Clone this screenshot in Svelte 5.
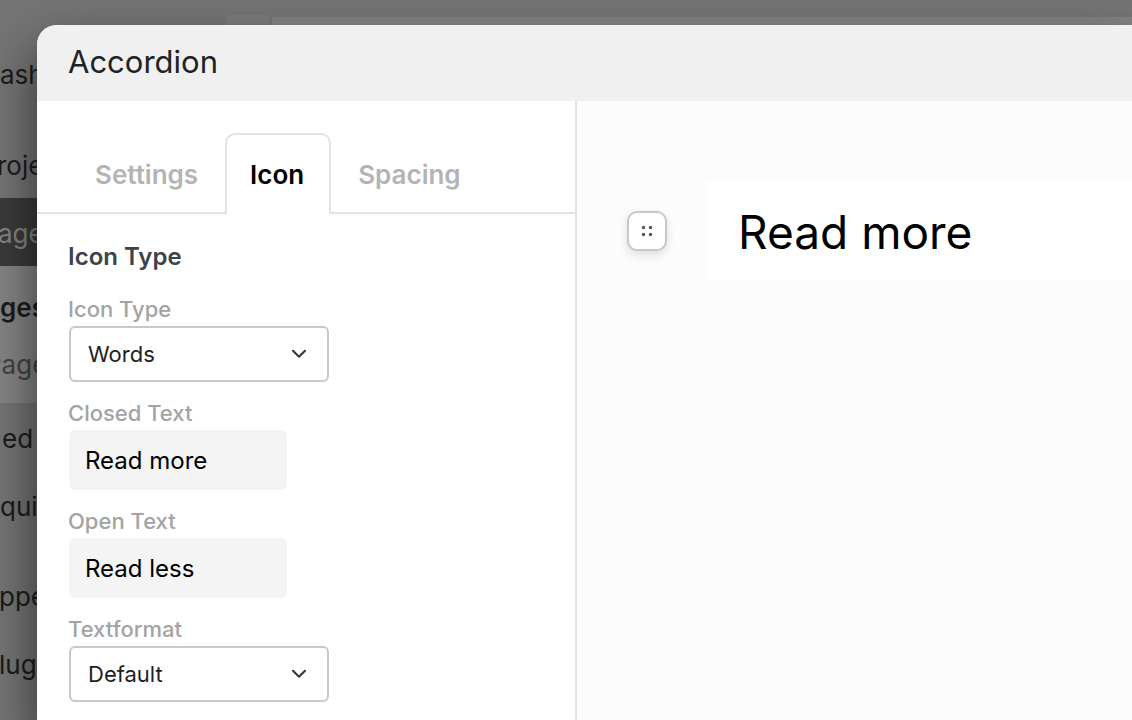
<script>
  const navItems = [
    { label: 'ash', kind: 'first' },
    { label: 'roje', kind: 'project' },
    { label: 'age', kind: 'active' },
    { label: 'ges', kind: 'sub strong' },
    { label: 'Page', kind: 'sub current' },
    { label: 'ed', kind: 'media' },
    { label: 'qui', kind: 'menu' },
    { label: 'ppe', kind: 'appearance' },
    { label: 'lug', kind: 'plugins' }
  ];
  const tabs = ['Settings', 'Icon', 'Spacing'];

  let activeTab = $state('Icon');
  let iconType = $state('Words');
  let closedText = $state('Read more');
  let openText = $state('Read less');
  let textformat = $state('Default');
</script>

{#snippet chevron()}
  <svg class="chevron" viewBox="0 0 16 10" aria-hidden="true">
    <path d="M2 1.8 8 7.8 14 1.8" fill="none" stroke="#333" stroke-width="2" stroke-linecap="round" stroke-linejoin="round" />
  </svg>
{/snippet}

<div class="page">
  <nav class="sidebar">
    {#each navItems as item}
      <a href="#top" class="nav {item.kind}">{item.label}</a>
    {/each}
  </nav>
  <div class="backdrop-main">
    <div class="stub"></div>
    <div class="strip"></div>
  </div>

  <section class="modal" role="dialog" aria-labelledby="title">
    <header>
      <h1 id="title">Accordion</h1>
    </header>
    <div class="body">
      <aside class="panel">
        <div class="tabs" role="tablist">
          {#each tabs as tab}
            <button
              role="tab"
              aria-selected={activeTab === tab}
              class:active={activeTab === tab}
              onclick={() => (activeTab = tab)}>{tab}</button>
          {/each}
        </div>
        <form class="fields">
          <h2>Icon Type</h2>
          <div class="field">
            <label for="icon-type">Icon Type</label>
            <div class="select">
              <select id="icon-type" bind:value={iconType}>
                <option>Words</option>
              </select>
              {@render chevron()}
            </div>
          </div>
          <div class="field">
            <label for="closed-text">Closed Text</label>
            <input id="closed-text" type="text" bind:value={closedText} />
          </div>
          <div class="field">
            <label for="open-text">Open Text</label>
            <input id="open-text" type="text" bind:value={openText} />
          </div>
          <div class="field">
            <label for="textformat">Textformat</label>
            <div class="select">
              <select id="textformat" bind:value={textformat}>
                <option>Default</option>
              </select>
              {@render chevron()}
            </div>
          </div>
        </form>
      </aside>
      <main class="preview">
        <button class="handle" aria-label="Drag">
          <svg viewBox="0 0 12 12" aria-hidden="true" fill="#555">
            <circle cx="2.5" cy="2.5" r="1.7" />
            <circle cx="9.5" cy="2.5" r="1.7" />
            <circle cx="2.5" cy="9.5" r="1.7" />
            <circle cx="9.5" cy="9.5" r="1.7" />
          </svg>
        </button>
        <div class="accordion">{closedText}</div>
      </main>
    </div>
  </section>
</div>

<style>
  :global(body) {
    margin: 0;
    background: #737373;
  }
  .page,
  .page * {
    box-sizing: border-box;
  }
  .page {
    position: relative;
    display: flex;
    height: 100vh;
    overflow: hidden;
    font-family: Inter, 'Liberation Sans', sans-serif;
    background: #747474;
  }
  h1,
  h2 {
    margin: 0;
  }
  button,
  input,
  select {
    font: inherit;
  }

  .sidebar {
    display: flex;
    flex-direction: column;
    width: 226px;
    padding-top: 40px;
  }
  .nav {
    display: flex;
    align-items: center;
    height: 68px;
    flex: none;
    padding-top: 2px;
    font-size: 26px;
    color: #1b1b1b;
    text-decoration: none;
  }
  .first {
    padding-top: 0;
  }
  .project {
    margin-top: 22px;
    text-indent: -3px;
  }
  .active {
    background: #3a3a3a;
    color: #858585;
    text-indent: -2px;
  }
  .sub {
    background: #848484;
    color: #424242;
  }
  .strong {
    height: 80px;
    font-weight: 600;
    color: #1b1b1b;
  }
  .current {
    height: 57px;
    padding-bottom: 22px;
    text-indent: -15px;
  }
  .media {
    text-indent: 2px;
  }
  .appearance {
    margin-top: 22px;
  }
  .appearance,
  .plugins {
    text-indent: -1px;
  }

  .backdrop-main {
    display: flex;
    flex: 1;
    gap: 2px;
    padding-top: 15px;
  }
  .stub {
    width: 44px;
    background: #7b7b7b;
  }
  .strip {
    flex: 1;
    margin-top: 2px;
    background: #828282;
  }

  .modal {
    position: absolute;
    inset: 25px 0 0 37px;
    display: flex;
    flex-direction: column;
    border-top-left-radius: 20px;
    background: #fff;
    box-shadow: 0 24px 50px rgba(0, 0, 0, 0.6);
  }
  header {
    padding: 17px 31px 19px;
    border-top-left-radius: 20px;
    background: #f0f0f0;
  }
  h1 {
    font-size: 31px;
    line-height: 40px;
    font-weight: 400;
    color: #1d2327;
  }
  .body {
    display: flex;
    flex: 1;
  }
  .panel {
    width: 540px;
    flex: none;
    border-right: 2px solid #e2e2e2;
  }
  .tabs {
    display: flex;
    padding: 32px 0 0 31px;
    box-shadow: inset 0 -2px #e2e2e2;
  }
  .tabs button {
    height: 81px;
    padding: 0 25px;
    border: 2px solid transparent;
    border-bottom: 0;
    border-radius: 10px 10px 0 0;
    background: none;
    font-size: 26px;
    font-weight: 600;
    color: #b4b4b4;
  }
  .tabs button.active {
    border-color: #e2e2e2;
    background: #fff;
    color: #000;
  }
  .fields {
    display: flex;
    flex-direction: column;
    padding: 28px 31px 0;
  }
  h2 {
    margin-bottom: 22px;
    font-size: 24px;
    line-height: 30px;
    font-weight: 600;
    color: #3c434a;
  }
  .field {
    display: flex;
    flex-direction: column;
    align-items: flex-start;
    margin-bottom: 16px;
  }
  label {
    height: 32px;
    font-size: 22px;
    line-height: 30px;
    font-weight: 500;
    color: #a3a3a3;
  }
  .select {
    display: grid;
    align-items: center;
    width: 260px;
    margin-left: 1px;
  }
  .select > :global(*) {
    grid-area: 1 / 1;
  }
  select {
    appearance: none;
    width: 100%;
    height: 56px;
    padding: 0 17px;
    border: 2px solid #c8c8c8;
    border-radius: 6px;
    background: #fff;
    font-size: 22px;
    color: #1e1e1e;
  }
  .chevron {
    justify-self: end;
    width: 16px;
    height: 10px;
    margin-right: 22px;
    pointer-events: none;
  }
  input {
    width: 218px;
    height: 60px;
    margin-left: 1px;
    padding: 0 16px;
    border: 0;
    border-radius: 6px;
    background: #f4f4f4;
    font-size: 24px;
    color: #000;
  }

  .preview {
    display: flex;
    flex: 1;
    align-items: flex-start;
    gap: 40px;
    padding: 80px 0 0 50px;
    background: #fcfcfc;
  }
  .handle {
    display: grid;
    place-items: center;
    width: 40px;
    height: 40px;
    margin-top: 30px;
    padding: 0;
    border: 2px solid #c8c8c8;
    border-radius: 10px;
    background: #fff;
    box-shadow: 0 4px 10px rgba(0, 0, 0, 0.12);
  }
  .handle svg {
    width: 12px;
    height: 12px;
  }
  .accordion {
    flex: 1;
    padding: 21px 31px 19px;
    background: #fff;
    font-size: 46px;
    line-height: 60px;
    color: #000;
  }
</style>
